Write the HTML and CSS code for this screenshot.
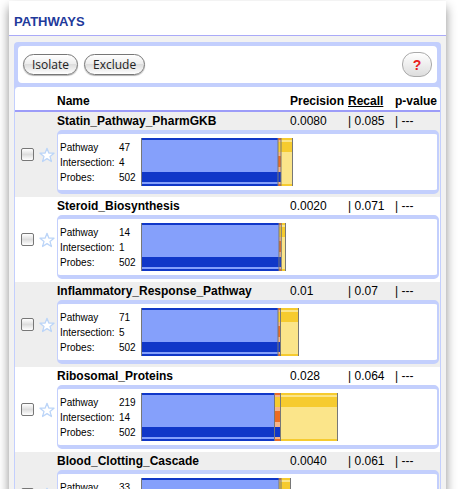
FILE: index.html
```html
<!DOCTYPE html>
<html lang="en">
<head>
<meta charset="utf-8">
<title>Pathways</title>
<link rel="stylesheet" href="styles.css">
</head>
<body>
<svg class="defs" aria-hidden="true">
  <defs>
    <linearGradient id="blue" x2="0" y2="1">
      <stop offset=".05" stop-color="#1037c8"/><stop offset=".05" stop-color="#85a0fb"/>
      <stop offset=".7" stop-color="#85a0fb"/><stop offset=".7" stop-color="#1037c8"/>
      <stop offset=".91" stop-color="#1037c8"/><stop offset=".91" stop-color="#85a0fb"/>
      <stop offset=".96" stop-color="#85a0fb"/><stop offset=".96" stop-color="#1037c8"/>
    </linearGradient>
    <linearGradient id="yellow" x2="0" y2="1">
      <stop offset=".05" stop-color="#f6cb2f"/><stop offset=".05" stop-color="#fbe58a"/>
      <stop offset=".09" stop-color="#fbe58a"/><stop offset=".09" stop-color="#f6cb2f"/>
      <stop offset=".3" stop-color="#f6cb2f"/><stop offset=".3" stop-color="#fbe58a"/>
      <stop offset=".96" stop-color="#fbe58a"/><stop offset=".96" stop-color="#f6cb2f"/>
    </linearGradient>
    <linearGradient id="shared" x2="0" y2="1">
      <stop offset=".05" stop-color="#ec6c23"/><stop offset=".05" stop-color="#f5b58a"/>
      <stop offset=".09" stop-color="#f5b58a"/><stop offset=".09" stop-color="#f6cb2f"/>
      <stop offset=".3" stop-color="#f6cb2f"/><stop offset=".3" stop-color="#f5b58a"/>
      <stop offset=".38" stop-color="#f5b58a"/><stop offset=".38" stop-color="#ec6c23"/>
      <stop offset=".61" stop-color="#ec6c23"/><stop offset=".61" stop-color="#f5b58a"/>
      <stop offset=".7" stop-color="#f5b58a"/><stop offset=".7" stop-color="#1037c8"/>
      <stop offset=".91" stop-color="#1037c8"/><stop offset=".91" stop-color="#f5b58a"/>
      <stop offset=".96" stop-color="#f5b58a"/><stop offset=".96" stop-color="#ec6c23"/>
    </linearGradient>
    <symbol id="star" viewBox="0 0 16 16">
      <path d="M8 1.3 L9.8 6 L15 6.2 L11 9.4 L12.4 14.5 L8 11.6 L3.6 14.5 L5 9.4 L1 6.2 L6.2 6 Z" fill="#fff" stroke="#bcd5f8" stroke-width="1.3" stroke-linejoin="round"/>
    </symbol>
  </defs>
</svg>
<main class="page">
  <h1 class="title">PATHWAYS</h1>
  <div class="content">
    <section class="panel">
      <div class="toolbar">
        <button class="pill" type="button">Isolate</button>
        <button class="pill" type="button">Exclude</button>
        <button class="help" type="button" aria-label="Help">?</button>
      </div>
      <table class="pathways">
        <colgroup><col class="c-check"><col class="c-star"><col><col class="c-precision"><col class="c-recall"><col class="c-pvalue"></colgroup>
        <thead>
          <tr><th></th><th></th><th>Name</th><th>Precision</th><th><a class="sorted" href="#">Recall</a></th><th>p-value</th></tr>
        </thead>
        <tbody>
          <tr class="name"><td rowspan="2" class="pick"><input type="checkbox" aria-label="Statin_Pathway_PharmGKB"></td><td rowspan="2" class="pick"><button class="star" type="button" aria-label="Favorite"><svg><use href="#star"/></svg></button></td><th>Statin_Pathway_PharmGKB</th><td>0.0080</td><td>| 0.085</td><td>| ---</td></tr>
          <tr class="detail"><td colspan="4"><div class="card"><dl><dt>Pathway</dt><dd>47</dd><dt>Intersection:</dt><dd>4</dd><dt>Probes:</dt><dd>502</dd></dl>
            <svg class="chart" viewBox="0 0 200 48"><rect width="138" height="48" fill="url(#blue)"/><rect x="140" width="12" height="48" fill="url(#yellow)"/><rect x="137" width="3" height="48" fill="url(#shared)"/><path d="M.5 0V48M137 0V48M140 0V48M151.5 0V48"/></svg></div></td></tr>
        </tbody>
        <tbody>
          <tr class="name"><td rowspan="2" class="pick"><input type="checkbox" aria-label="Steroid_Biosynthesis"></td><td rowspan="2" class="pick"><button class="star" type="button" aria-label="Favorite"><svg><use href="#star"/></svg></button></td><th>Steroid_Biosynthesis</th><td>0.0020</td><td>| 0.071</td><td>| ---</td></tr>
          <tr class="detail"><td colspan="4"><div class="card"><dl><dt>Pathway</dt><dd>14</dd><dt>Intersection:</dt><dd>1</dd><dt>Probes:</dt><dd>502</dd></dl>
            <svg class="chart" viewBox="0 0 200 48"><rect width="138" height="48" fill="url(#blue)"/><rect x="140" width="5" height="48" fill="url(#yellow)"/><rect x="138" width="2" height="48" fill="url(#shared)"/><path d="M.5 0V48M138 0V48M140.3 0V48M144.5 0V48"/></svg></div></td></tr>
        </tbody>
        <tbody>
          <tr class="name"><td rowspan="2" class="pick"><input type="checkbox" aria-label="Inflammatory_Response_Pathway"></td><td rowspan="2" class="pick"><button class="star" type="button" aria-label="Favorite"><svg><use href="#star"/></svg></button></td><th>Inflammatory_Response_Pathway</th><td>0.01</td><td>| 0.07</td><td>| ---</td></tr>
          <tr class="detail"><td colspan="4"><div class="card"><dl><dt>Pathway</dt><dd>71</dd><dt>Intersection:</dt><dd>5</dd><dt>Probes:</dt><dd>502</dd></dl>
            <svg class="chart" viewBox="0 0 200 48"><rect width="138" height="48" fill="url(#blue)"/><rect x="139" width="19" height="48" fill="url(#yellow)"/><rect x="137" width="2" height="48" fill="url(#shared)"/><path d="M.5 0V48M137 0V48M139.5 0V48M157.5 0V48"/></svg></div></td></tr>
        </tbody>
        <tbody>
          <tr class="name"><td rowspan="2" class="pick"><input type="checkbox" aria-label="Ribosomal_Proteins"></td><td rowspan="2" class="pick"><button class="star" type="button" aria-label="Favorite"><svg><use href="#star"/></svg></button></td><th>Ribosomal_Proteins</th><td>0.028</td><td>| 0.064</td><td>| ---</td></tr>
          <tr class="detail"><td colspan="4"><div class="card"><dl><dt>Pathway</dt><dd>219</dd><dt>Intersection:</dt><dd>14</dd><dt>Probes:</dt><dd>502</dd></dl>
            <svg class="chart" viewBox="0 0 200 48"><rect width="134" height="48" fill="url(#blue)"/><rect x="139" width="58" height="48" fill="url(#yellow)"/><rect x="134" width="5" height="48" fill="url(#shared)"/><path d="M.5 0V48M133.5 0V48M139.5 0V48M196.5 0V48"/></svg></div></td></tr>
        </tbody>
        <tbody>
          <tr class="name"><td rowspan="2" class="pick"><input type="checkbox" aria-label="Blood_Clotting_Cascade"></td><td rowspan="2" class="pick"><button class="star" type="button" aria-label="Favorite"><svg><use href="#star"/></svg></button></td><th>Blood_Clotting_Cascade</th><td>0.0040</td><td>| 0.061</td><td>| ---</td></tr>
          <tr class="detail"><td colspan="4"><div class="card"><dl><dt>Pathway</dt><dd>33</dd><dt>Intersection:</dt><dd>2</dd><dt>Probes:</dt><dd>502</dd></dl>
            <svg class="chart" viewBox="0 0 200 48"><rect width="138" height="48" fill="url(#blue)"/><rect x="139" width="11" height="48" fill="url(#yellow)"/><rect x="138" width="2" height="48" fill="url(#shared)"/><path d="M.5 0V48M138 0V48M140 0V48M149.5 0V48"/></svg></div></td></tr>
        </tbody>
      </table>
    </section>
  </div>
</main>
</body>
</html>
```

FILE: styles.css
```css
* { box-sizing: border-box; }

body {
  margin: 0;
  height: 100vh;
  overflow: hidden;
  background: #fff;
  color: #000;
  font: 12px/18px "Liberation Sans", Arial, sans-serif;
}

.defs { position: absolute; width: 0; height: 0; }

.page {
  margin: 1px 14px 0 9px;
  background: #fff;
  box-shadow: 0 6px 10px rgba(0, 0, 0, .45);
}

.title {
  margin: 0;
  padding: 12px 5px 4px;
  border-bottom: 1px solid #aaaaf8;
  background: #fff;
  color: #1f3a9b;
  font-size: 13px;
  line-height: 18px;
}

.content { padding: 6px 5px; background: #f2f2f2; }

.panel { border-radius: 4px; background: #c3cffd; }

.toolbar {
  display: flex;
  align-items: center;
  gap: 6px;
  height: 45px;
  padding: 0 5px;
  border: 4px solid #c3cffd;
  border-radius: 8px;
  background: #fff;
}

button { margin: 0; font: inherit; }

.pill {
  height: 21px;
  padding: 0 8px;
  border: 1px solid #777;
  border-radius: 11px;
  background: linear-gradient(#fff, #eee 45%, #ddd 50%, #fff);
  box-shadow: 0 1px 1px rgba(0, 0, 0, .3);
  color: #222;
  font: 12px/18px "Open Sans", sans-serif;
}

.help {
  width: 30px;
  height: 25px;
  margin-left: auto;
  padding: 0;
  border: 1px solid #aaa;
  border-radius: 12px;
  background: linear-gradient(#fff, #ddd);
  color: #e8201c;
  font-size: 14px;
  font-weight: bold;
}

.pathways {
  width: 100%;
  table-layout: fixed;
  border-spacing: 0;
  border: solid #c3cffd;
  border-width: 0 1px;
  border-radius: 4px 4px 0 0;
  background: #fff;
}

.c-check { width: 24px; }
.c-star { width: 18px; }
.c-precision { width: 58px; }
.c-recall { width: 47px; }
.c-pvalue { width: 45px; }

th, td { padding: 0; text-align: left; white-space: nowrap; }

thead th {
  height: 25px;
  padding-top: 5px;
  border-bottom: 2px solid #9c9cf8;
}

.sorted { color: inherit; }

tbody:nth-of-type(odd) { background: #eee; }

.name { height: 18px; }

.pick { padding-left: 6px; vertical-align: middle; }
.pick + .pick { padding-left: 0; }

input {
  display: block;
  appearance: none;
  width: 13px;
  height: 13px;
  margin: 0;
  border: 1px solid #777;
  border-radius: 2px;
  background: linear-gradient(#fff, #ddd 50%, #fff);
}

.star {
  display: block;
  padding: 0;
  border: 0;
  background: none;
}

.star svg { display: block; width: 16px; height: 16px; }

.detail td { padding: 0 1px 3px 0; }

.card {
  display: flex;
  align-items: center;
  height: 64px;
  padding-left: 2px;
  border: solid #c3cffd;
  border-width: 4px 2px 4px 1px;
  border-radius: 5px;
  background: #fff;
}

dl {
  display: grid;
  grid-template-columns: 59px 22px;
  width: 81px;
  margin: 0;
  font-size: 10px;
  line-height: 15px;
}

dt, dd { margin: 0; }

.chart { display: block; flex: none; width: 200px; height: 48px; }
.chart path { fill: none; stroke: #777; }
```
